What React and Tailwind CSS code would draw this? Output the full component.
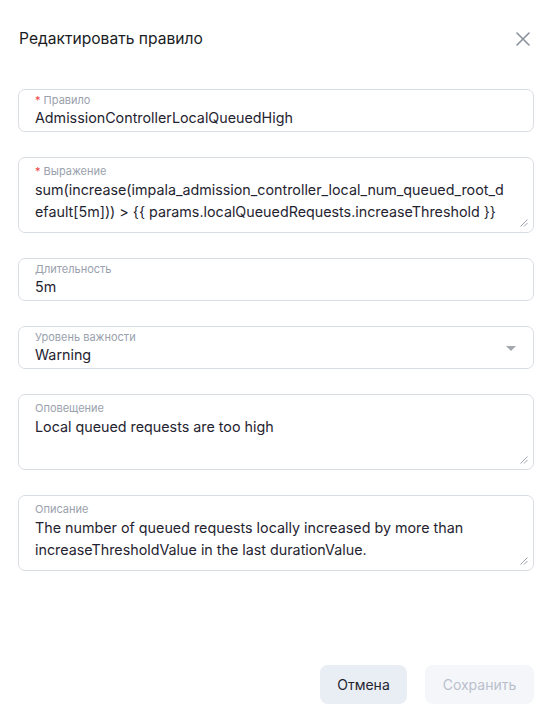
import React from "react";

const font = { fontFamily: "Inter, 'Noto Sans', sans-serif" };

function Grip() {
  return (
    <svg className="absolute right-[5px] bottom-[5px]" width="9" height="9" viewBox="0 0 9 9">
      <path d="M8.5 1.5 L1.5 8.5 M8.5 5 L5 8.5" stroke="#9ca3af" strokeWidth="1" fill="none" />
    </svg>
  );
}

function Input({ label, required, value, select }) {
  return (
    <div className="relative h-[43px] rounded-[7px] border border-[#d9dde5] px-4 pt-[3px]">
      <div className="text-[11px] leading-[15px] text-[#9aa1ad]">
        {required && <span className="text-[#ef4444]">* </span>}
        {label}
      </div>
      <div className="text-[14.3px] leading-[20px] text-[#1f2430]">{value}</div>
      {select && (
        <svg className="absolute right-[17px] top-[19px]" width="10" height="5" viewBox="0 0 10 5">
          <path d="M0 0 L10 0 L5 5 Z" fill="#a3a7ae" />
        </svg>
      )}
    </div>
  );
}

function Area({ label, required, lines }) {
  return (
    <div className="relative h-[76px] rounded-[7px] border border-[#d9dde5] px-4 pt-[6px]">
      <div className="text-[11px] leading-[15px] text-[#9aa1ad]">
        {required && <span className="text-[#ef4444]">* </span>}
        {label}
      </div>
      <div className="flex flex-col text-[14.3px] leading-[22px] text-[#1f2430] whitespace-nowrap">
        {lines.map((l, i) => (
          <div key={i}>{l}</div>
        ))}
      </div>
      <Grip />
    </div>
  );
}

export default function App() {
  return (
    <div style={font} className="w-[550px] h-[722px] bg-white flex flex-col pl-[18px] pr-[16px]">
      <div className="flex items-center justify-between h-[77px] pt-[1px]">
        <div className="text-[15.6px] text-[#1a1d24] pl-[1px]">Редактировать правило</div>
        <svg width="14" height="14" viewBox="0 0 14 14" className="mr-[4px]">
          <path d="M1 1 L13 13 M13 1 L1 13" stroke="#8a929e" strokeWidth="1.6" strokeLinecap="round" />
        </svg>
      </div>
      <div className="flex flex-col gap-[25px] mt-[12px]">
        <Input required label="Правило" value="AdmissionControllerLocalQueuedHigh" />
        <Area
          required
          label="Выражение"
          lines={[
            "sum(increase(impala_admission_controller_local_num_queued_root_d",
            "efault[5m])) > {{ params.localQueuedRequests.increaseThreshold }}",
          ]}
        />
        <Input label="Длительность" value="5m" />
        <Input label="Уровень важности" value="Warning" select />
        <Area label="Оповещение" lines={["Local queued requests are too high"]} />
        <Area
          label="Описание"
          lines={[
            "The number of queued requests locally increased by more than",
            "increaseThresholdValue in the last durationValue.",
          ]}
        />
      </div>
      <div className="flex-1" />
      <div className="flex justify-end gap-[18px] mb-[18px]">
        <button className="h-[39px] w-[87px] rounded-[8px] bg-[#e9edf4] text-[14px] text-[#1f2430]">Отмена</button>
        <button className="h-[39px] w-[109px] rounded-[8px] bg-[#f5f6fa] text-[14px] text-[#b9c0cc]">Сохранить</button>
      </div>
    </div>
  );
}
